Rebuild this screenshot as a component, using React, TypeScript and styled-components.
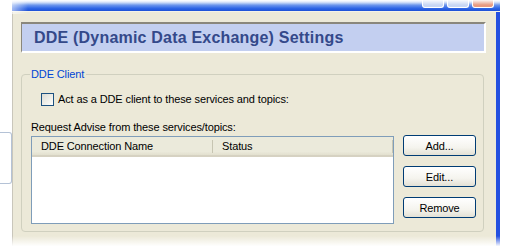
import React from "react";
import styled, { createGlobalStyle } from "styled-components";

const GlobalStyle = createGlobalStyle`
  html, body {
    margin: 0;
    padding: 0;
    background: #ffffff;
  }
  body {
    font-family: "Liberation Sans", Arial, sans-serif;
    font-size: 11px;
    letter-spacing: -0.12px;
    color: #000;
  }
`;

const Stage = styled.div`
  position: relative;
  width: 508px;
  height: 249px;
  overflow: hidden;
  background: #ffffff;
`;

const Window = styled.div`
  display: flex;
  flex-direction: column;
  margin-left: 12px;
  width: 488px;
  height: 249px;
`;

const TitleBar = styled.div`
  display: flex;
  justify-content: flex-end;
  align-items: flex-start;
  height: 11px;
  padding-right: 6px;
  gap: 3px;
  background: linear-gradient(to bottom, #e8effc 0%, #8fb0f0 30%, #2f66e6 75%, #1c4fd6 100%);
  border-bottom: 1px solid #f4f2e8;
`;

const CaptionButton = styled.div<{ $close?: boolean }>`
  width: 20px;
  height: 7px;
  border: 1px solid #ffffff;
  border-top: none;
  border-radius: 0 0 3px 3px;
  background: ${(p) => (p.$close ? "#e89a80" : "#c7d6f4")};
`;

const Body = styled.div`
  flex: 1;
  display: flex;
  flex-direction: column;
  gap: 15px;
  padding: 10px 10px 0 8px;
  background: #ece9d8;
  border-left: 1px solid #c9c6bb;
  border-right: 4px solid #2450e0;
`;

const Header = styled.div`
  height: 27px;
  display: flex;
  align-items: center;
  padding-left: 12px;
  background: #c3cff0;
  border-top: 2px solid #8a877c;
  border-left: 1px solid #8a877c;
  border-right: 2px solid #ffffff;
  border-bottom: 2px solid #ffffff;
  font-family: "Liberation Sans", Arial, sans-serif;
  font-weight: bold;
  font-size: 16px;
  letter-spacing: 0.2px;
  color: #34498a;
`;

const Group = styled.fieldset`
  margin: 0;
  width: 463px;
  height: 164px;
  box-sizing: border-box;
  padding: 0 0 0 8px;
  border: 1px solid #d0d0bf;
  border-radius: 4px;
  min-width: 0;
`;

const Legend = styled.legend`
  padding: 0 2px 0 1px;
  color: #0046d5;
  font-size: 11px;
`;

const GroupInner = styled.div`
  display: flex;
  flex-direction: column;
  margin-left: -8px;
  padding: 12px 8px 0 9px;
`;

const CheckRow = styled.label`
  display: flex;
  align-items: center;
  gap: 4px;
  margin-left: 10px;
  height: 14px;
`;

const CheckBox = styled.span`
  width: 11px;
  height: 11px;
  border: 1px solid #1c5180;
  background: linear-gradient(135deg, #dcdcd4 0%, #f4f4ef 70%, #ffffff 100%);
`;

const Caption = styled.div`
  margin-top: 14px;
  height: 14px;
  line-height: 14px;
`;

const ListRow = styled.div`
  display: flex;
  gap: 9px;
  margin-top: 2px;
`;

const ListView = styled.div`
  width: 362px;
  height: 86px;
  border: 1px solid #7f9db9;
  background: #ffffff;
`;

const ListHeader = styled.div`
  display: flex;
  height: 18px;
  background: linear-gradient(to bottom, #ebeadb 0%, #ebeadb 80%, #e2e0cf 100%);
  border-bottom: 2px solid #d6d2c2;
`;

const Column = styled.div<{ $w: number }>`
  width: ${(p) => p.$w}px;
  display: flex;
  align-items: center;
  padding-left: 9px;
  box-sizing: border-box;
  border-right: 1px solid #c7c5b2;
  margin: 3px 0 2px;
  line-height: 13px;
`;

const ButtonColumn = styled.div`
  display: flex;
  flex-direction: column;
  gap: 10px;
  margin-top: -1px;
`;

const Button = styled.button`
  width: 73px;
  height: 21px;
  box-sizing: border-box;
  border: 1px solid #003c74;
  border-radius: 3px;
  background: linear-gradient(to bottom, #ffffff 0%, #f5f4ee 60%, #e3e1d5 100%);
  font-family: "Liberation Sans", Arial, sans-serif;
  font-size: 11px;
  letter-spacing: -0.12px;
  color: #000;
  padding: 0;
`;

const FadeTop = styled.div`
  position: absolute;
  left: 0;
  top: 0;
  width: 508px;
  height: 5px;
  background: linear-gradient(to bottom, rgba(255, 255, 255, 0.9), rgba(255, 255, 255, 0));
`;

const FadeLeft = styled.div`
  position: absolute;
  left: 0;
  top: 0;
  width: 28px;
  height: 14px;
  background: linear-gradient(to right, #ffffff 0%, rgba(255, 255, 255, 0) 100%);
`;

const FadeBottom = styled.div`
  position: absolute;
  left: 0;
  bottom: 0;
  width: 508px;
  height: 13px;
  background: linear-gradient(to bottom, rgba(255, 255, 255, 0), #ffffff 80%);
`;

const BehindEdge = styled.div`
  position: absolute;
  left: -10px;
  top: 132px;
  width: 21px;
  height: 50px;
  border: 1px solid #b4c2d6;
  border-left: none;
  border-radius: 0 3px 3px 0;
`;

export default function App() {
  return (
    <Stage>
      <GlobalStyle />
      <BehindEdge />
      <Window>
        <TitleBar>
          <CaptionButton />
          <CaptionButton />
          <CaptionButton $close />
        </TitleBar>
        <Body>
          <Header>DDE (Dynamic Data Exchange) Settings</Header>
          <Group>
            <Legend>DDE Client</Legend>
            <GroupInner>
              <CheckRow>
                <CheckBox />
                Act as a DDE client to these services and topics:
              </CheckRow>
              <Caption>Request Advise from these services/topics:</Caption>
              <ListRow>
                <ListView>
                  <ListHeader>
                    <Column $w={181}>DDE Connection Name</Column>
                    <Column $w={180}>Status</Column>
                  </ListHeader>
                </ListView>
                <ButtonColumn>
                  <Button>Add...</Button>
                  <Button>Edit...</Button>
                  <Button>Remove</Button>
                </ButtonColumn>
              </ListRow>
            </GroupInner>
          </Group>
        </Body>
      </Window>
      <FadeTop />
      <FadeLeft />
      <FadeBottom />
    </Stage>
  );
}
